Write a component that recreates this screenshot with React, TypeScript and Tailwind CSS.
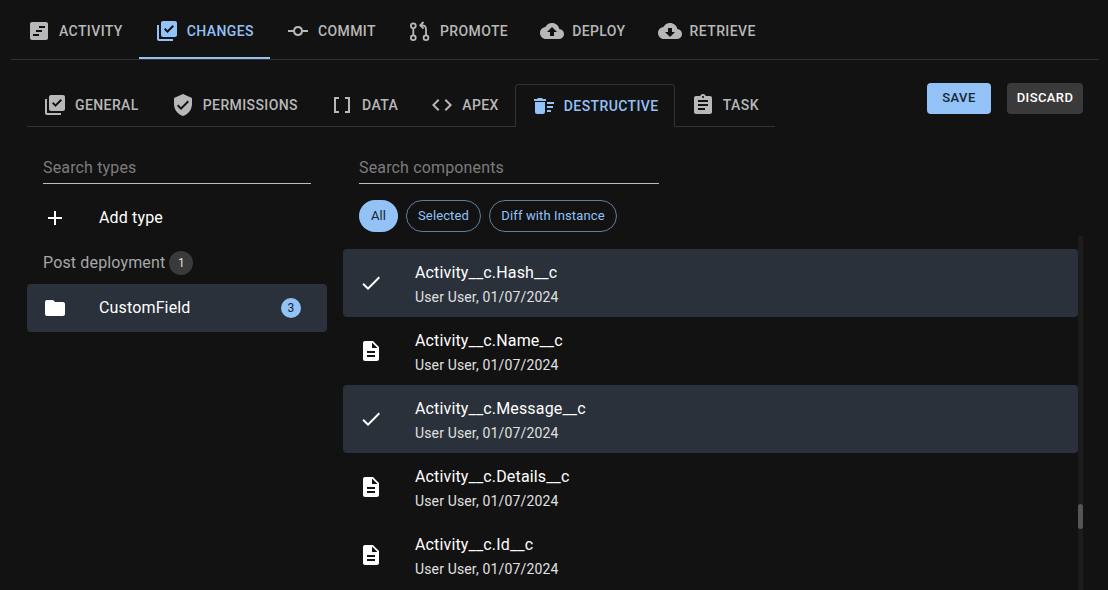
import type { ReactNode } from "react";

const paths = {
  changes: "M20 2H8c-1.1 0-2 .9-2 2v12c0 1.1.9 2 2 2h12c1.1 0 2-.9 2-2V4c0-1.1-.9-2-2-2zm-7.53 12L9 10.5l1.4-1.41 2.07 2.08L17.6 6 19 7.41 12.47 14zM4 20h14v2H4c-1.1 0-2-.9-2-2V6h2v14z",
  shield: "M12 1L3 5v6c0 5.55 3.84 10.74 9 12 5.16-1.26 9-6.45 9-12V5l-9-4zm-2 16l-4-4 1.41-1.41L10 14.17l6.59-6.59L18 9l-8 8z",
  commit: "M16.9 11a5 5 0 0 0-9.8 0H2v2h5.1a5 5 0 0 0 9.8 0H22v-2h-5.1zM12 15c-1.66 0-3-1.34-3-3s1.34-3 3-3 3 1.34 3 3-1.34 3-3 3z",
  data: "M15 4v2h3v12h-3v2h5V4zM4 20h5v-2H6V6h3V4H4z",
  code: "M9.4 16.6 4.8 12l4.6-4.6L8 6l-6 6 6 6 1.4-1.4zm5.2 0 4.6-4.6-4.6-4.6L16 6l6 6-6 6-1.4-1.4z",
  sweep: "M15 16h4v2h-4zm0-8h7v2h-7zm0 4h6v2h-6zM3 18c0 1.1.9 2 2 2h6c1.1 0 2-.9 2-2V8H3v10zM14 5h-3l-1-1H6L5 5H2v2h12z",
  task: "M19 3h-4.18C14.4 1.84 13.3 1 12 1c-1.3 0-2.4.84-2.82 2H5c-1.1 0-2 .9-2 2v14c0 1.1.9 2 2 2h14c1.1 0 2-.9 2-2V5c0-1.1-.9-2-2-2zm-7 0c.55 0 1 .45 1 1s-.45 1-1 1-1-.45-1-1 .45-1 1-1zm2 14H7v-2h7v2zm3-4H7v-2h10v2zm0-4H7V7h10v2z",
  upload: "M19.35 10.04C18.67 6.59 15.64 4 12 4 9.11 4 6.6 5.64 5.35 8.04 2.34 8.36 0 10.91 0 14c0 3.31 2.69 6 6 6h13c2.76 0 5-2.24 5-5 0-2.64-2.05-4.78-4.65-4.96zM14 13v4h-4v-4H7l5-5 5 5h-3z",
  download: "M19.35 10.04C18.67 6.59 15.64 4 12 4 9.11 4 6.6 5.64 5.35 8.04 2.34 8.36 0 10.91 0 14c0 3.31 2.69 6 6 6h13c2.76 0 5-2.24 5-5 0-2.64-2.05-4.78-4.65-4.96zM17 13l-5 5-5-5h3V9h4v4h3z",
  folder: "M10 4H4c-1.1 0-1.99.9-1.99 2L2 18c0 1.1.9 2 2 2h16c1.1 0 2-.9 2-2V8c0-1.1-.9-2-2-2h-8l-2-2z",
  file: "M14 2H6c-1.1 0-1.99.9-1.99 2L4 20c0 1.1.89 2 1.99 2H18c1.1 0 2-.9 2-2V8l-6-6zm2 16H8v-2h8v2zm0-4H8v-2h8v2zm-3-5V3.5L18.5 9H13z",
  check: "M9 16.17 4.83 12l-1.42 1.41L9 19 21 7l-1.41-1.41z",
  add: "M19 13h-6v6h-2v-6H5v-2h6V5h2v6h6v2z",
  activity: "M19 3H5c-1.1 0-2 .9-2 2v14c0 1.1.9 2 2 2h14c1.1 0 2-.9 2-2V5c0-1.1-.9-2-2-2zm-7 14H6v-2h6v2zm3-4H9v-2h6v2zm3-4h-6V7h6v2z",
};

function Icon({ d }: { d: string }) {
  return (
    <svg viewBox="0 0 24 24" className="w-6 h-6 shrink-0 fill-current">
      <path d={d} />
    </svg>
  );
}

function PromoteIcon() {
  return (
    <svg viewBox="0 0 24 24" className="w-6 h-6 shrink-0 fill-none stroke-current" strokeWidth="1.8">
      <circle cx="5.3" cy="6.7" r="2.4" />
      <circle cx="5.3" cy="18.7" r="2.4" />
      <circle cx="18" cy="18.7" r="2.4" />
      <path d="M5.3 9.1v7.2M18 16.3V10c0-2.4-1.2-3.6-3.6-3.6H12.5" />
      <path d="M15.5 3 12.3 6.3l3.2 3.2" />
    </svg>
  );
}

function Tab({ icon, label, active, boxed }: { icon: ReactNode; label: string; active?: boolean; boxed?: boolean }) {
  return (
    <div
      className={`relative flex items-center gap-2 text-sm font-medium tracking-[0.4px] ${
        active ? "text-[#93c2f7]" : "text-[#b8b8b8]"
      } ${boxed ? "w-[160px] h-[43px] pl-4 pr-[14px] border border-b-0 border-[#333] rounded-t-[4px] bg-[#121212] -mb-px" : "px-4"}`}
    >
      {icon}
      <span>{label}</span>
    </div>
  );
}

function SearchField({ placeholder, className }: { placeholder: string; className: string }) {
  return (
    <div className={`h-8 border-b border-[#bdbdbd] text-base leading-6 tracking-[0.15px] text-[#7c7c7c] pt-[4px] ${className}`}>{placeholder}</div>
  );
}

const rows = [
  { name: "Activity__c.Hash__c", selected: true },
  { name: "Activity__c.Name__c" },
  { name: "Activity__c.Message__c", selected: true },
  { name: "Activity__c.Details__c" },
  { name: "Activity__c.Id__c" },
];

export default function App() {
  return (
    <div
      className="relative w-[1108px] h-[590px] overflow-hidden bg-[#121212] text-white"
      style={{ fontFamily: "Roboto, sans-serif" }}
    >
      {/* Main tabs */}
      <div className="ml-[11px] mr-[9px] h-[60px] flex border-b border-[#333]">
        <div className="flex items-center pt-[3px]">
          <Tab icon={<Icon d={paths.activity} />} label="ACTIVITY" />
        </div>
        <div className="flex items-center pt-[5px] border-b-2 border-[#93c2f7] h-[59px]">
          <Tab icon={<Icon d={paths.changes} />} label="CHANGES" active />
        </div>
        <div className="flex items-center pt-[3px]">
          <Tab icon={<Icon d={paths.commit} />} label="COMMIT" />
        </div>
        <div className="flex items-center pt-[3px]">
          <Tab icon={<PromoteIcon />} label="PROMOTE" />
        </div>
        <div className="flex items-center pt-[3px]">
          <Tab icon={<Icon d={paths.upload} />} label="DEPLOY" />
        </div>
        <div className="flex items-center pt-[3px]">
          <Tab icon={<Icon d={paths.download} />} label="RETRIEVE" />
        </div>
      </div>

      {/* Sub tabs + actions */}
      <div className="flex justify-between pl-[27px] pr-[25px] pt-[24px]">
        <div className="flex w-[748px] h-[43px] border-b border-[#333] items-stretch">
          <Tab icon={<Icon d={paths.changes} />} label="GENERAL" />
          <Tab icon={<Icon d={paths.shield} />} label="PERMISSIONS" />
          <Tab icon={<Icon d={paths.data} />} label="DATA" />
          <Tab icon={<Icon d={paths.code} />} label="APEX" />
          <Tab icon={<Icon d={paths.sweep} />} label="DESTRUCTIVE" active boxed />
          <Tab icon={<Icon d={paths.task} />} label="TASK" />
        </div>
        <div className="flex gap-4 items-start -mt-px">
          <div className="w-16 h-[31px] pb-[2px] rounded-[4px] bg-[#93c2f7] text-[#1b2530] text-[13px] font-medium tracking-[0.4px] flex items-center justify-center">
            SAVE
          </div>
          <div className="w-[76px] h-[31px] pb-[2px] rounded-[4px] bg-[#3a3a3a] text-white text-[13px] font-medium tracking-[0.4px] flex items-center justify-center">
            DISCARD
          </div>
        </div>
      </div>

      <div className="flex pl-[27px] pt-[25px]">
        {/* Types column */}
        <div className="w-[300px] shrink-0">
          <SearchField placeholder="Search types" className="mx-4" />
          <div className="flex items-center h-12 mt-[10px] px-4 text-base tracking-[0.15px]">
            <span className="w-14 text-white"><Icon d={paths.add} /></span>
            <span>Add type</span>
          </div>
          <div className="flex items-center h-7 mt-[7px] px-4 gap-[4px] text-base tracking-[0.15px] text-[#a8a8a8]">
            <span>Post deployment</span>
            <span className="w-6 h-6 rounded-full bg-[#3a3a3a] text-[#e0e0e0] text-xs flex items-center justify-center">1</span>
          </div>
          <div className="flex items-center h-12 mt-[7px] px-4 rounded-[4px] bg-[#2a313a] text-base tracking-[0.15px]">
            <span className="w-14"><Icon d={paths.folder} /></span>
            <span className="flex-1">CustomField</span>
            <span className="w-5 h-5 mr-[10px] rounded-full bg-[#93c2f7] text-[#1b2530] text-xs flex items-center justify-center">3</span>
          </div>
        </div>

        {/* Components column */}
        <div className="ml-4 flex-1 pr-[30px]">
          <SearchField placeholder="Search components" className="mx-4 w-[300px]" />
          <div className="flex gap-2 mx-4 mt-4 text-[13px] tracking-[0.12px]">
            <span className="h-8 w-[39px] rounded-full bg-[#93c2f7] text-[#1b2530] flex items-center justify-center">All</span>
            <span className="h-8 w-[75px] rounded-full border border-[#5d7f9f] text-[#93c2f7] flex items-center justify-center">Selected</span>
            <span className="h-8 w-[128px] rounded-full border border-[#5d7f9f] text-[#93c2f7] flex items-center justify-center">Diff with Instance</span>
          </div>
          <div className="mt-[17px]">
            {rows.map((row) => (
              <div key={row.name} className={`flex items-center h-[68px] px-4 rounded-[4px] ${row.selected ? "bg-[#2a313a]" : ""}`}>
                <span className="w-14"><Icon d={row.selected ? paths.check : paths.file} /></span>
                <div className="mt-[2px] tracking-[0.15px]">
                  <div className="text-base leading-6">{row.name}</div>
                  <div className="text-sm leading-5 mt-[2px] text-[#e0e0e0]">User User, 01/07/2024</div>
                </div>
              </div>
            ))}
          </div>
        </div>
      </div>

      {/* Scrollbar */}
      <div className="absolute left-[1078px] top-[236px] bottom-0 w-[5px] bg-[#1c1c1c]">
        <div className="absolute top-[268px] w-[5px] h-[25px] rounded-full bg-[#555]" />
      </div>
    </div>
  );
}
